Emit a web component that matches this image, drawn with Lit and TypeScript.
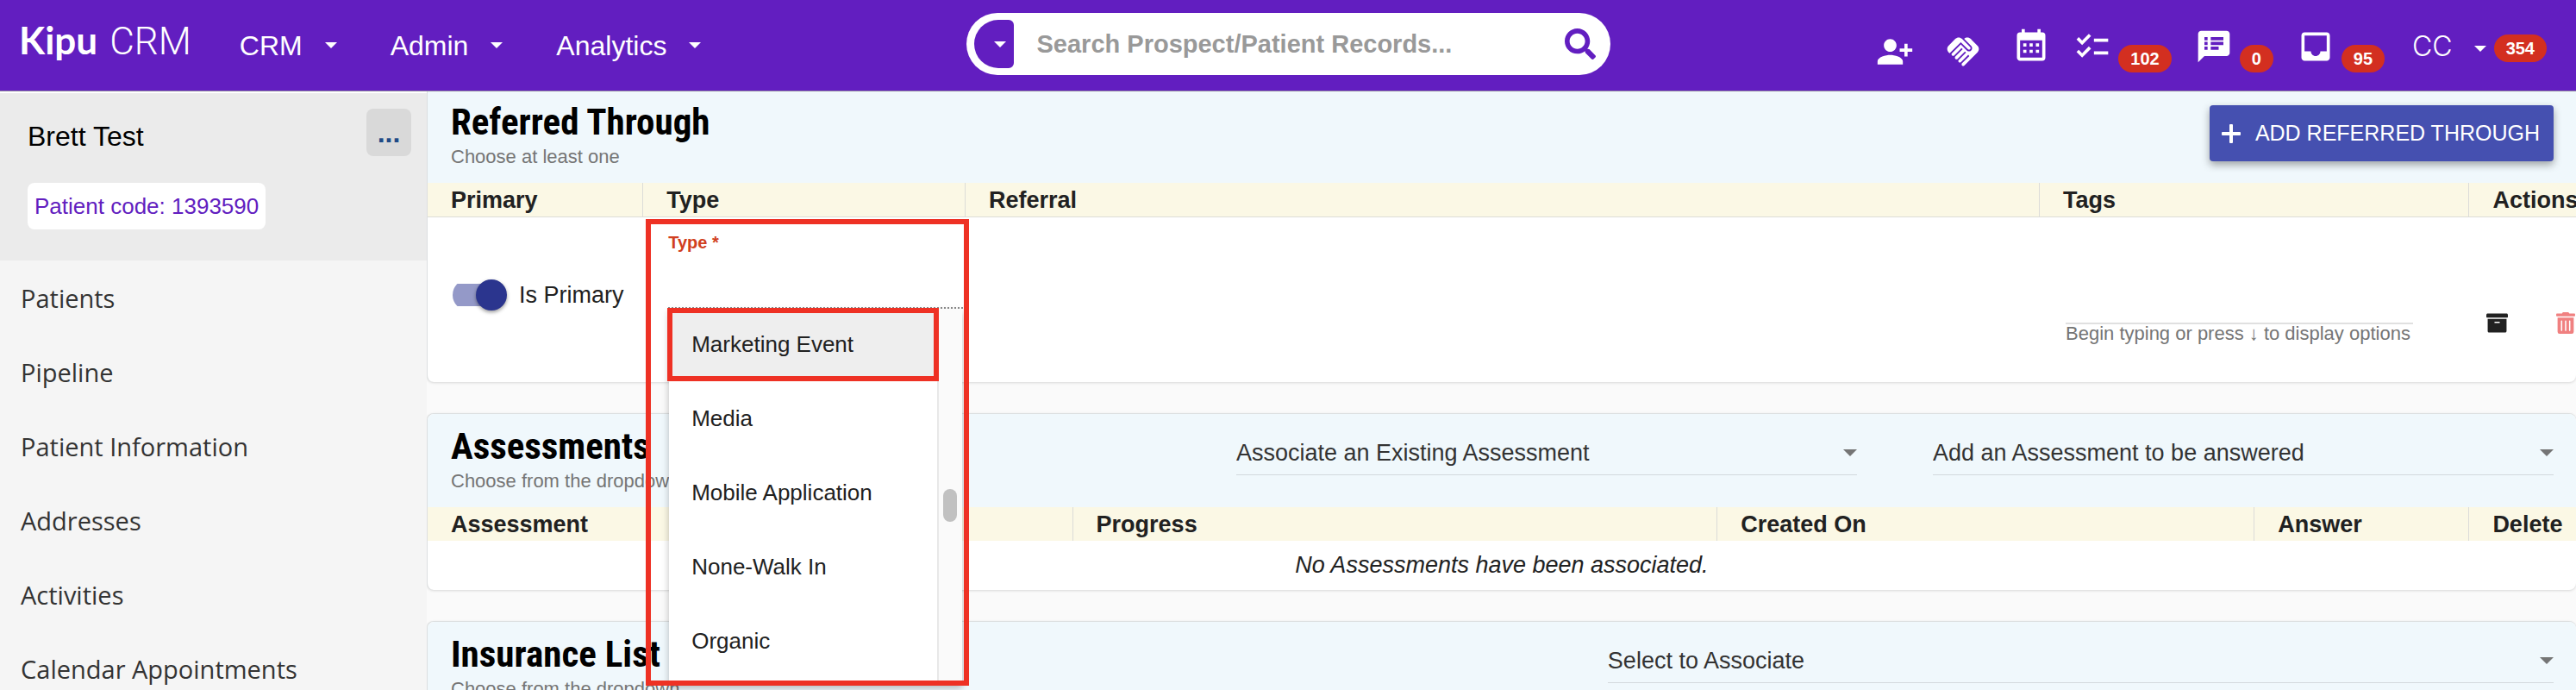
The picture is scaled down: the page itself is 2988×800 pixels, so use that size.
import { LitElement, html, css, svg, nothing } from "lit";
import { customElement, property } from "lit/decorators.js";

type Glyph = { box: string; path: string };

const GLYPHS: Record<string, Glyph> = {
  personAdd: {
    box: "0 0 24 24",
    path: "M13 8c0-2.21-1.79-4-4-4S5 5.79 5 8s1.79 4 4 4 4-1.79 4-4zm2 2v2h3v3h2v-3h3v-2h-3V7h-2v3h-3zM1 18v2h16v-2c0-2.66-5.33-4-8-4s-8 1.34-8 4z",
  },
  handshake: {
    box: "0 0 24 24",
    path: "M16.48,10.41c-0.39,0.39-1.04,0.39-1.43,0l-4.47-4.46l-7.05,7.04l-0.66-0.63c-1.17-1.17-1.17-3.07,0-4.24l4.24-4.24 c1.17-1.17,3.07-1.17,4.24,0L16.48,9C16.87,9.39,16.87,10.02,16.48,10.41z M17.18,8.29c0.78,0.78,0.78,2.05,0,2.83 c-1.27,1.27-2.61,0.22-2.83,0l-3.76-3.76l-5.57,5.57c-0.39,0.39-0.39,1.02,0,1.41c0.39,0.39,1.02,0.39,1.42,0l4.62-4.62l0.71,0.71 l-4.62,4.62c-0.39,0.39-0.39,1.02,0,1.41c0.39,0.39,1.02,0.39,1.42,0l4.62-4.62l0.71,0.71l-4.62,4.62c-0.39,0.39-0.39,1.02,0,1.41 c0.39,0.39,1.02,0.39,1.41,0l4.62-4.62l0.71,0.71l-4.62,4.62c-0.39,0.39-0.39,1.02,0,1.41c0.39,0.39,1.02,0.39,1.41,0l8.32-8.34 c1.17-1.17,1.17-3.07,0-4.24l-4.24-4.24c-1.15-1.15-3.01-1.17-4.18-0.06L17.18,8.29z",
  },
  calendar: {
    box: "0 0 24 24",
    path: "M9,10V12H7V10H9M13,10V12H11V10H13M17,10V12H15V10H17M19,3A2,2 0 0,1 21,5V19A2,2 0 0,1 19,21H5C3.89,21 3,20.1 3,19V5A2,2 0 0,1 5,3H6V1H8V3H16V1H18V3H19M19,19V8H5V19H19M9,14V16H7V14H9M13,14V16H11V14H13M17,14V16H15V14H17Z",
  },
  checklist: {
    box: "0 0 24 24",
    path: "M22,7h-9v2h9V7z M22,15h-9v2h9V15z M5.54,11L2,7.46l1.41-1.41l2.12,2.12l4.24-4.24l1.41,1.41L5.54,11z M5.54,19L2,15.46l1.41-1.41l2.12,2.12l4.24-4.24l1.41,1.41L5.54,19z",
  },
  notes: {
    box: "0 0 24 24",
    path: "M20,2H4C2.9,2 2.01,2.9 2.01,4L2,22l4,-4h14c1.1,0 2,-0.9 2,-2V4C22,2.9 21.1,2 20,2z M8,14H6v-2h2V14z M8,11H6V9h2V11z M8,8H6V6h2V8z M15,14h-5v-2h5V14z M18,11h-8V9h8V11z M18,8h-8V6h8V8z",
  },
  inbox: {
    box: "0 0 24 24",
    path: "M19 3H4.99c-1.11 0-1.98.89-1.98 2L3 19c0 1.1.88 2 1.99 2H19c1.1 0 2-.9 2-2V5c0-1.11-.9-2-2-2zm0 12h-4c0 1.66-1.35 3-3 3s-3-1.34-3-3H4.99V5H19v10z",
  },
  search: {
    box: "0 0 512 512",
    path: "M505 442.7L405.3 343c-4.5-4.5-10.6-7-17-7H372c27.6-35.3 44-79.7 44-128C416 93.1 322.9 0 208 0S0 93.1 0 208s93.1 208 208 208c48.3 0 92.7-16.4 128-44v16.3c0 6.4 2.5 12.5 7 17l99.7 99.7c9.4 9.4 24.6 9.4 33.9 0l28.3-28.3c9.4-9.4 9.4-24.6.1-34zM208 336c-70.7 0-128-57.2-128-128 0-70.7 57.2-128 128-128 70.7 0 128 57.2 128 128 0 70.7-57.2 128-128 128z",
  },
  archive: {
    box: "0 0 512 512",
    path: "M32 448c0 17.7 14.3 32 32 32h384c17.7 0 32-14.3 32-32V160H32v288zm160-212c0-6.6 5.4-12 12-12h104c6.6 0 12 5.4 12 12v8c0 6.6-5.4 12-12 12H204c-6.6 0-12-5.4-12-12v-8zM480 32H32C14.3 32 0 46.3 0 64v48c0 8.8 7.2 16 16 16h480c8.8 0 16-7.2 16-16V64c0-17.7-14.3-32-32-32z",
  },
  trash: {
    box: "0 0 448 512",
    path: "M32 464a48 48 0 0 0 48 48h288a48 48 0 0 0 48-48V128H32zm272-256a16 16 0 0 1 32 0v224a16 16 0 0 1-32 0zm-96 0a16 16 0 0 1 32 0v224a16 16 0 0 1-32 0zm-96 0a16 16 0 0 1 32 0v224a16 16 0 0 1-32 0zM432 32H312l-9.4-18.7A24 24 0 0 0 281.1 0H166.8a23.72 23.72 0 0 0-21.4 13.3L136 32H16A16 16 0 0 0 0 48v32a16 16 0 0 0 16 16h416a16 16 0 0 0 16-16V48a16 16 0 0 0-16-16z",
  },
  plus: {
    box: "0 0 22 22",
    path: "M10 0h2a1 1 0 0 1 1 1v8h8a1 1 0 0 1 1 1v2a1 1 0 0 1-1 1h-8v8a1 1 0 0 1-1 1h-2a1 1 0 0 1-1-1v-8H1a1 1 0 0 1-1-1v-2a1 1 0 0 1 1-1h8V1a1 1 0 0 1 1-1z",
  },
  caret: { box: "0 0 14 7", path: "M0 0h14L7 7z" },
};

const glyph = (name: string, cls: string) => html`
  <svg class=${cls} viewBox=${GLYPHS[name].box} aria-hidden="true" fill="currentColor">
    ${svg`<path d=${GLYPHS[name].path}></path>`}
  </svg>
`;

const base = css`
  * {
    box-sizing: border-box;
  }
  a {
    color: inherit;
    text-decoration: none;
  }
  button,
  input,
  select {
    margin: 0;
    padding: 0;
    border: 0;
    border-radius: 0;
    background: none;
    color: inherit;
    font: inherit;
    outline: 0;
  }
  svg {
    display: block;
    flex: none;
  }
`;

@customElement("top-bar")
class TopBar extends LitElement {
  static styles = [
    base,
    css`
      :host {
        display: grid;
        grid-template-columns: 1fr 25% 1fr;
        height: 106px;
        background: #621ec0;
        border-bottom: 1px solid #8f87a0;
        color: #fff;
        font-size: 32px;
        line-height: 36px;
      }
      .left {
        display: flex;
        align-items: center;
        padding-left: 22px;
      }
      .logo {
        display: flex;
        align-items: baseline;
        gap: 14px;
        align-self: flex-start;
        margin-top: 20px;
        font: 300 44px/52px Roboto, sans-serif;
        white-space: nowrap;
      }
      .brand {
        font-family: Lato, sans-serif;
        font-weight: 700;
      }
      .menus {
        display: flex;
        gap: 62px;
        margin-left: 56px;
      }
      .menu {
        display: flex;
        align-items: center;
        gap: 26px;
      }
      .caret {
        width: 14px;
        height: 7px;
      }
      .search {
        display: flex;
        align-items: center;
        height: 72px;
        margin-top: 15px;
        padding: 0 17px 0 9px;
        border-radius: 36px;
        background: #fff;
      }
      .scope {
        display: flex;
        align-items: center;
        justify-content: flex-end;
        width: 46px;
        height: 56px;
        padding-right: 9px;
        border-radius: 28px 6px 6px 28px;
        background: #621ec0;
        color: #fff;
      }
      .query {
        flex: 1;
        min-width: 0;
        padding-left: 27px;
        color: #333;
        font-weight: 700;
        font-size: 29px;
      }
      .query::placeholder {
        color: #999;
        opacity: 1;
      }
      .go {
        color: #621ec0;
      }
      .go-icon {
        width: 36px;
        height: 36px;
      }
      .tools {
        display: flex;
        align-items: flex-start;
        justify-content: flex-end;
        gap: 27px;
        padding: 32px 34px 0 0;
      }
      .tool {
        display: flex;
        gap: 8px;
      }
      .icon {
        width: 44px;
        height: 44px;
      }
      .low {
        margin-right: 8px;
        padding-top: 6px;
      }
      .badge {
        padding: 0 14px;
        border-radius: 16px;
        background: #d32f20;
        font-weight: 700;
        font-size: 20px;
        line-height: 32px;
      }
      .drop {
        margin-top: 20px;
      }
      .account {
        display: flex;
        align-items: center;
        padding: 4px 0 0 5px;
      }
      .initials {
        font-family: Inter, sans-serif;
        font-weight: 300;
      }
      .account .caret {
        margin: 4px 9px 0 25px;
      }
      .account .badge {
        margin-top: 4px;
      }
    `,
  ];

  private tool(name: string, label: string, count?: string, low = false) {
    return html`<a class="tool ${low ? "low" : ""}" href="#" aria-label=${label}>
      ${glyph(name, "icon")}${count ? html`<span class="badge drop">${count}</span>` : nothing}
    </a>`;
  }

  render() {
    return html`
      <div class="left">
        <a class="logo" href="#"><span class="brand">Kipu</span><span>CRM</span></a>
        <nav class="menus">
          ${["CRM", "Admin", "Analytics"].map(
            (m) => html`<a class="menu" href="#">${m}${glyph("caret", "caret")}</a>`
          )}
        </nav>
      </div>
      <form class="search" role="search">
        <button class="scope" type="button" aria-label="Search scope">${glyph("caret", "caret")}</button>
        <input class="query" type="text" aria-label="Search" placeholder="Search Prospect/Patient Records..." />
        <button class="go" type="button" aria-label="Search">${glyph("search", "go-icon")}</button>
      </form>
      <div class="tools">
        ${this.tool("personAdd", "Add person", undefined, true)}
        ${this.tool("handshake", "Referrals", undefined, true)}
        ${this.tool("calendar", "Calendar")}
        ${this.tool("checklist", "Tasks", "102")}
        ${this.tool("notes", "Messages", "0")}
        ${this.tool("inbox", "Inbox", "95")}
        <a class="account" href="#"
          ><span class="initials">CC</span>${glyph("caret", "caret")}<span class="badge">354</span></a
        >
      </div>
    `;
  }
}

@customElement("side-nav")
class SideNav extends LitElement {
  static styles = [
    base,
    css`
      :host {
        display: block;
        padding-top: 2px;
        background: linear-gradient(#fff, #fff) 0 0 / 100% 2px no-repeat #f5f5f5;
        overflow: hidden;
      }
      .person {
        padding: 18px 18px 36px 32px;
        background: #ebebeb;
      }
      .row {
        display: flex;
        justify-content: space-between;
        align-items: flex-start;
      }
      .name {
        margin: 14px 0 0;
        color: #000;
        font-weight: 400;
        font-size: 32px;
        line-height: 36px;
      }
      .more {
        width: 52px;
        height: 55px;
        border-radius: 8px;
        background: #d9d9d9;
        color: #1f4a86;
        font-weight: 700;
        font-size: 32px;
        line-height: 36px;
      }
      .code {
        display: inline-block;
        margin-top: 31px;
        padding: 12px 8px;
        border-radius: 8px;
        background: #fff;
        color: #621ec0;
        font-size: 26px;
        line-height: 30px;
      }
      .link {
        display: flex;
        align-items: center;
        height: 86px;
        padding-left: 24px;
        color: #333;
        font-family: "Open Sans", sans-serif;
        font-size: 29px;
      }
    `,
  ];

  render() {
    const links = [
      "Patients",
      "Pipeline",
      "Patient Information",
      "Addresses",
      "Activities",
      "Calendar Appointments",
    ];
    return html`
      <section class="person">
        <div class="row">
          <h1 class="name">Brett Test</h1>
          <button class="more" type="button" aria-label="More actions">...</button>
        </div>
        <span class="code">Patient code: 1393590</span>
      </section>
      <nav>${links.map((l) => html`<a class="link" href="#">${l}</a>`)}</nav>
    `;
  }
}

@customElement("pick-list")
class PickList extends LitElement {
  @property() label = "";

  static styles = [
    base,
    css`
      :host {
        display: block;
      }
      .box {
        display: grid;
        align-items: center;
        border-bottom: 1px solid #d3d9dd;
      }
      .choice,
      .arrow {
        grid-area: 1 / 1;
      }
      .choice {
        width: 100%;
        padding: 18px 0 9px;
        appearance: none;
        color: #333;
        font-size: 27px;
        line-height: 31px;
      }
      .arrow {
        justify-self: end;
        width: 16px;
        height: 8px;
        margin-top: 8px;
        color: #757575;
        pointer-events: none;
      }
    `,
  ];

  render() {
    return html`<div class="box">
      <select class="choice" aria-label=${this.label}>
        <option>${this.label}</option>
      </select>
      ${glyph("caret", "arrow")}
    </div>`;
  }
}

@customElement("type-picker")
class TypePicker extends LitElement {
  static styles = [
    base,
    css`
      :host {
        display: block;
        position: relative;
        padding: 17px 2px 0 30px;
      }
      .label {
        display: block;
        color: #d13f20;
        font-weight: 700;
        font-size: 20px;
        line-height: 24px;
      }
      .value {
        display: block;
        width: 100%;
        height: 65px;
        appearance: none;
        border-bottom: 2px dotted #8c8c8c;
      }
      .panel {
        position: absolute;
        z-index: 2;
        top: 106px;
        left: 31px;
        right: 3px;
        height: 436px;
        display: flex;
        overflow: hidden;
        background: #fff;
        box-shadow: 0 4px 8px rgba(0, 0, 0, 0.25);
      }
      .options {
        flex: 1;
        margin: -2px 0 0;
        padding: 0;
        list-style: none;
      }
      .option {
        display: flex;
        align-items: center;
        height: 86px;
        padding-left: 26px;
        color: #212121;
        font-size: 26px;
        line-height: 30px;
      }
      .active {
        background: #eee;
      }
      .track {
        display: flex;
        justify-content: center;
        width: 29px;
        padding-top: 209px;
        border-left: 2px solid #e8e8e8;
        background: #fafafa;
      }
      .thumb {
        width: 16px;
        height: 38px;
        border-radius: 8px;
        background: #c1c1c1;
      }
      .frame {
        position: absolute;
        z-index: 3;
        border: 6px solid #ee3124;
        pointer-events: none;
      }
      .outer {
        top: 2px;
        left: 4px;
        right: -5px;
        height: 541px;
      }
      .inner {
        top: 105px;
        left: 29px;
        right: 30px;
        height: 85px;
      }
    `,
  ];

  render() {
    const options = ["Marketing Event", "Media", "Mobile Application", "None-Walk In", "Organic"];
    return html`
      <label class="label" for="type">Type *</label>
      <select class="value" id="type"></select>
      <div class="panel">
        <ul class="options" role="listbox" aria-label="Type">
          ${options.map(
            (o, i) => html`<li class="option ${i === 0 ? "active" : ""}" role="option" aria-selected=${i === 0}>${o}</li>`
          )}
        </ul>
        <div class="track"><div class="thumb"></div></div>
      </div>
      <div class="frame outer"></div>
      <div class="frame inner"></div>
    `;
  }
}

@customElement("app-root")
class AppRoot extends LitElement {
  static styles = [
    base,
    css`
      :host {
        display: flex;
        flex-direction: column;
        height: 100vh;
        overflow: hidden;
        background: #fafafa;
        color: #212121;
        font-family: "Liberation Sans", Arial, sans-serif;
        font-size: 27px;
        line-height: 31px;
      }
      top-bar {
        flex: none;
      }
      .body {
        flex: 1;
        min-height: 0;
        display: flex;
      }
      side-nav {
        flex: none;
        width: 495px;
      }
      .main {
        flex: 1;
        min-width: 0;
        display: flex;
        flex-direction: column;
        gap: 36px;
        overflow: hidden;
      }
      .card {
        flex: none;
        border: 1px solid #dcdfe0;
        border-width: 1px 0 0 1px;
        border-radius: 8px;
        background: #fff;
        box-shadow: 0 1px 3px rgba(0, 0, 0, 0.14);
      }
      .card:first-child {
        border-top: 0;
        border-radius: 0 0 8px 8px;
      }
      .head {
        display: grid;
        gap: 88px;
        align-items: start;
        padding: 12px 26px 16px 27px;
        border-radius: 8px 8px 0 0;
        background: #f0f8fc;
      }
      .card:first-child .head {
        padding-top: 10px;
        border-radius: 0;
      }
      .with-button {
        grid-template-columns: 1fr auto;
      }
      .with-one {
        grid-template-columns: 8fr 7fr;
      }
      .with-two {
        grid-template-columns: 8fr 7fr 7fr;
      }
      .title {
        margin: 0;
        color: #000;
        font-family: "Liberation Sans Narrow", "Roboto Condensed", "Liberation Sans", sans-serif;
        font-weight: 700;
        font-size: 43px;
        line-height: 50px;
      }
      .hint {
        margin: 2px 0 0;
        color: #757575;
        font-size: 22px;
        line-height: 28px;
      }
      .add {
        display: flex;
        align-items: center;
        gap: 17px;
        height: 65px;
        margin-top: 6px;
        padding: 0 16px 0 14px;
        border-radius: 4px;
        background: #4550b0;
        box-shadow: 0 4px 10px rgba(0, 0, 0, 0.35);
        color: #fff;
        font-size: 25px;
        white-space: nowrap;
      }
      .plus {
        width: 22px;
        height: 22px;
      }
      .table {
        width: 100%;
        table-layout: fixed;
        border-collapse: separate;
        border-spacing: 0;
      }
      .table th {
        height: 39px;
        padding: 2px 0 0 27px;
        border-left: 1px solid #dcdcd8;
        background: #fbf8e5;
        font-weight: 700;
        text-align: left;
        white-space: nowrap;
      }
      .table th:first-child {
        border-left: 0;
      }
      .ruled th {
        height: 40px;
        border-bottom: 1px solid #dcdcd8;
      }
      .table td {
        padding: 0;
        vertical-align: top;
      }
      .w5 {
        width: 5%;
      }
      .w10 {
        width: 10%;
      }
      .w15 {
        width: 15%;
      }
      .w20 {
        width: 20%;
      }
      .w25 {
        width: 25%;
      }
      .w30 {
        width: 30%;
      }
      .referral-row {
        height: 191px;
      }
      .switch {
        display: flex;
        align-items: center;
        gap: 14px;
        padding: 72px 0 0 29px;
        white-space: nowrap;
      }
      .toggle {
        appearance: none;
        display: flex;
        align-items: center;
        justify-content: flex-end;
        width: 63px;
        height: 36px;
        background: linear-gradient(#9499c8, #9499c8) 0 5px / 56px 26px no-repeat;
        border-radius: 18px;
      }
      .toggle::before {
        content: "";
        width: 36px;
        height: 36px;
        border-radius: 50%;
        background: #2b358e;
        box-shadow: 0 2px 4px rgba(0, 0, 0, 0.4);
      }
      .tags {
        padding: 72px 64px 0 31px;
      }
      .tag-input {
        display: block;
        width: 100%;
        height: 52px;
        border-bottom: 2px solid #e0e0e0;
      }
      .tag-hint {
        display: block;
        color: #757575;
        font-size: 22px;
        line-height: 22px;
        white-space: nowrap;
      }
      .actions {
        display: flex;
        gap: 56px;
        padding: 110px 0 0 21px;
      }
      .act {
        color: #212121;
      }
      .danger {
        color: #f08080;
      }
      .archive {
        width: 25px;
        height: 25px;
      }
      .trash {
        width: 22px;
        height: 25px;
      }
      .table .empty {
        height: 57px;
        font-style: italic;
        text-align: center;
        vertical-align: middle;
      }
      .lower {
        height: 200px;
      }
    `,
  ];

  private heading(title: string, hint: string) {
    return html`<div>
      <h2 class="title">${title}</h2>
      <p class="hint">${hint}</p>
    </div>`;
  }

  render() {
    return html`
      <top-bar></top-bar>
      <div class="body">
        <side-nav></side-nav>
        <main class="main">
          <section class="card">
            <div class="head with-button">
              ${this.heading("Referred Through", "Choose at least one")}
              <button class="add" type="button">${glyph("plus", "plus")}ADD REFERRED THROUGH</button>
            </div>
            <table class="table">
              <thead>
                <tr class="ruled">
                  <th class="w10">Primary</th>
                  <th class="w15">Type</th>
                  <th>Referral</th>
                  <th class="w20">Tags</th>
                  <th class="w5">Actions</th>
                </tr>
              </thead>
              <tbody>
                <tr class="referral-row">
                  <td>
                    <label class="switch"
                      ><input class="toggle" type="checkbox" role="switch" checked />Is Primary</label
                    >
                  </td>
                  <td><type-picker></type-picker></td>
                  <td></td>
                  <td>
                    <div class="tags">
                      <input class="tag-input" id="tags" type="text" aria-label="Tags" aria-describedby="tag-hint" />
                      <span class="tag-hint" id="tag-hint">Begin typing or press ↓ to display options</span>
                    </div>
                  </td>
                  <td>
                    <div class="actions">
                      <button class="act" type="button" aria-label="Archive">${glyph("archive", "archive")}</button>
                      <button class="act danger" type="button" aria-label="Delete">${glyph("trash", "trash")}</button>
                    </div>
                  </td>
                </tr>
              </tbody>
            </table>
          </section>

          <section class="card">
            <div class="head with-two">
              ${this.heading("Assessments", "Choose from the dropdown")}
              <pick-list label="Associate an Existing Assessment"></pick-list>
              <pick-list label="Add an Assessment to be answered"></pick-list>
            </div>
            <table class="table">
              <thead>
                <tr>
                  <th class="w30">Assessment</th>
                  <th class="w30">Progress</th>
                  <th class="w25">Created On</th>
                  <th class="w10">Answer</th>
                  <th class="w5">Delete</th>
                </tr>
              </thead>
              <tbody>
                <tr>
                  <td class="empty" colspan="5">No Assessments have been associated.</td>
                </tr>
              </tbody>
            </table>
          </section>

          <section class="card lower">
            <div class="head with-one">
              ${this.heading("Insurance List", "Choose from the dropdown")}
              <pick-list label="Select to Associate"></pick-list>
            </div>
          </section>
        </main>
      </div>
    `;
  }
}
